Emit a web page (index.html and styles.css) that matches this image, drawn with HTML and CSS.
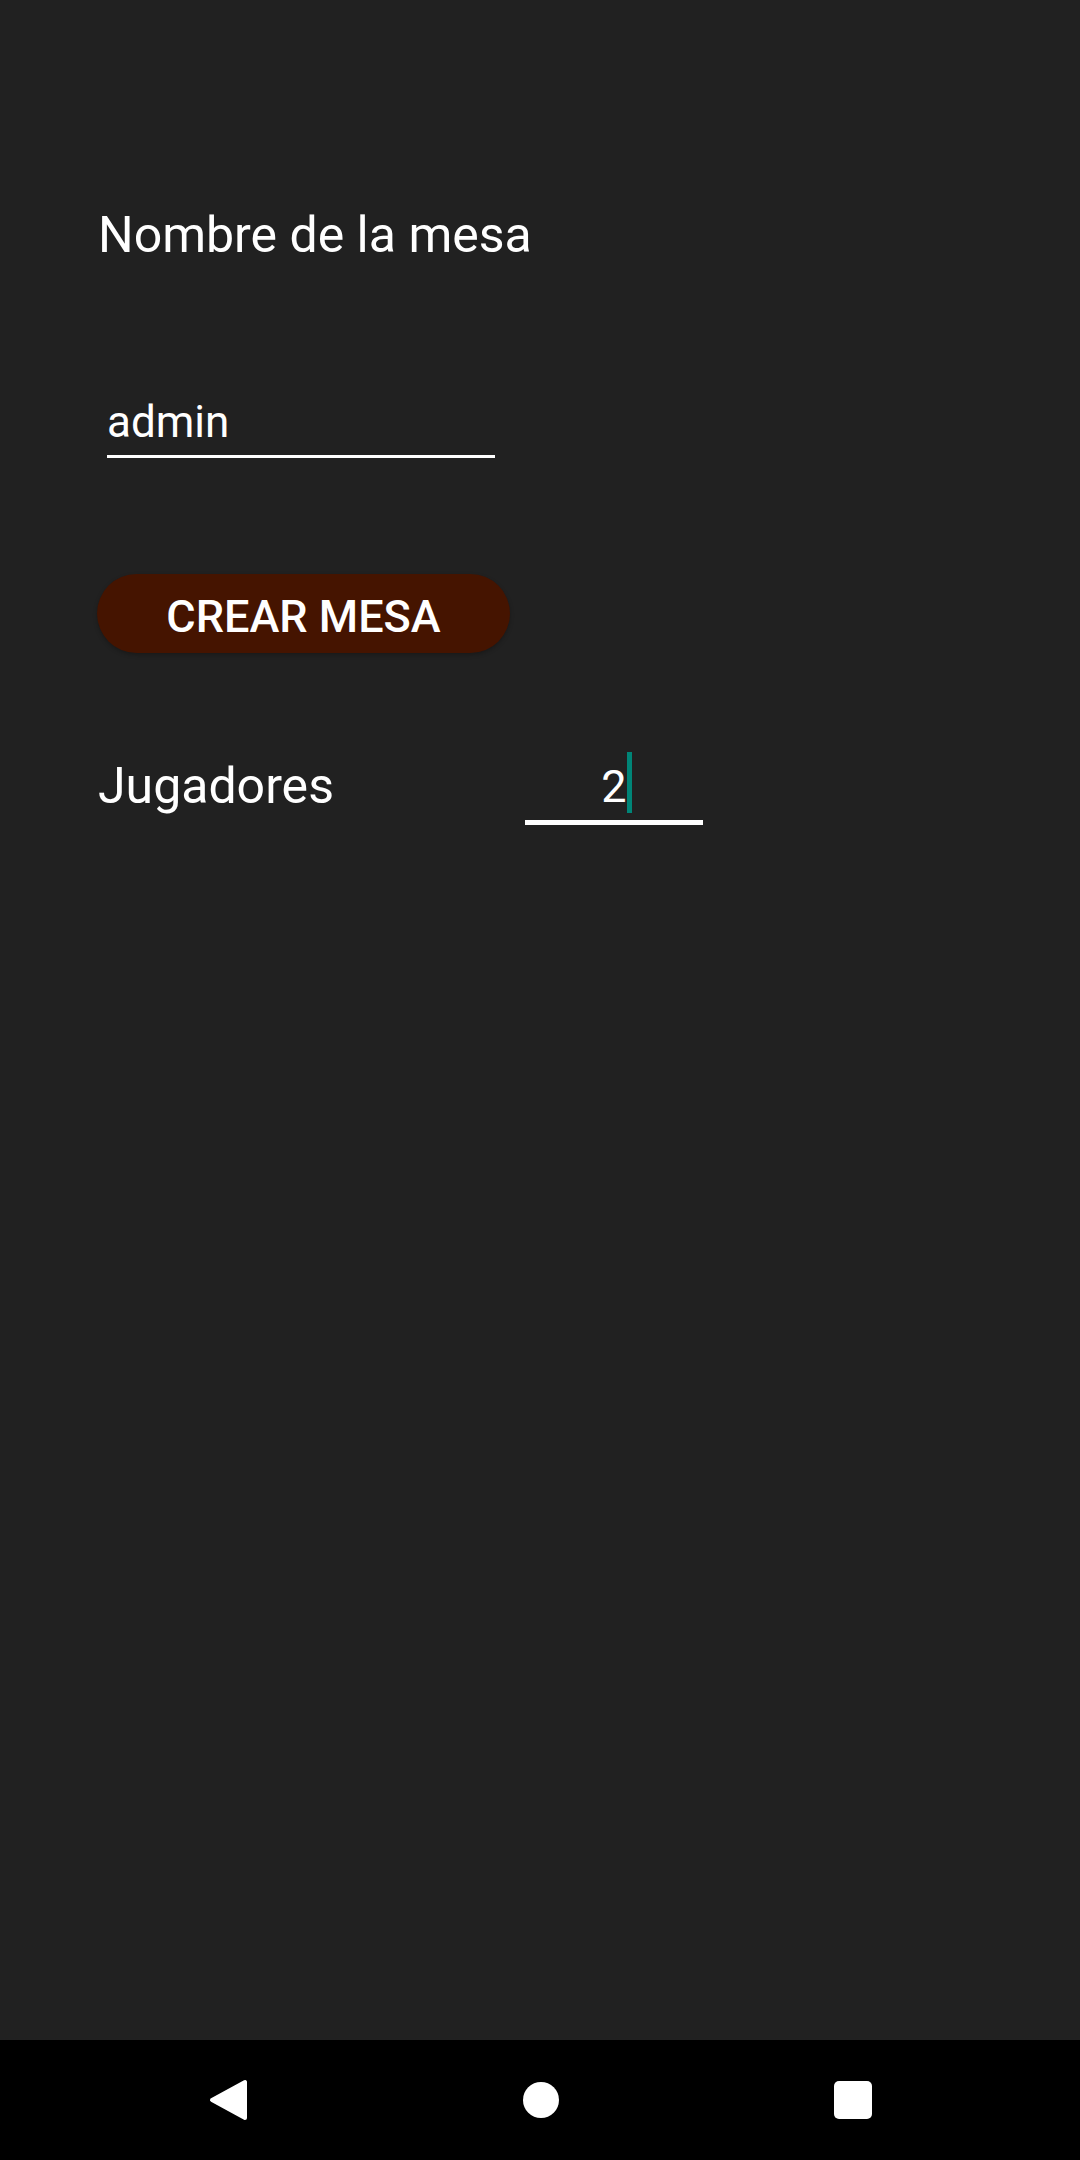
FILE: index.html
```html
<!DOCTYPE html>
<html lang="es">
<head>
<meta charset="utf-8">
<title>Crear mesa</title>
<link rel="stylesheet" href="styles.css">
</head>
<body>
<div class="screen">
  <main class="content">
    <div class="title">Nombre de la mesa</div>
    <div class="name-input">admin</div>
    <div class="btn">CREAR MESA</div>
    <div class="row">
      <div class="label">Jugadores</div>
      <div class="num-input"><span class="num">2<span class="cursor"></span></span></div>
    </div>
  </main>
  <nav class="navbar">
    <svg class="nav-icon" width="40" height="44" viewBox="0 0 40 44"><polygon points="37,4 37,40 4,22" fill="#fff" stroke="#fff" stroke-width="4" stroke-linejoin="round"/></svg>
    <span class="home"></span>
    <span class="recents"></span>
  </nav>
</div>
</body>
</html>
```

FILE: styles.css
```css
html, body {
  margin: 0;
  padding: 0;
  background: #212121;
}
.screen {
  width: 1080px;
  height: 2160px;
  display: flex;
  flex-direction: column;
  font-family: Roboto, "Liberation Sans", sans-serif;
  color: #ffffff;
}
.content {
  flex: 1;
  padding: 205px 0 0 98px;
  display: flex;
  flex-direction: column;
  align-items: flex-start;
}
.title {
  font-size: 50px;
  line-height: 60px;
  height: 60px;
}
.name-input {
  margin: 131px 0 0 9px;
  width: 388px;
  font-size: 44px;
  line-height: 52px;
  padding-bottom: 7px;
  border-bottom: 3px solid #ffffff;
}
.btn {
  margin: 116px 0 0 -1px;
  width: 413px;
  height: 73px;
  padding-top: 6px;
  line-height: 73px;
  border-radius: 40px;
  background: #451400;
  text-align: center;
  font-size: 45px;
  font-weight: 500;
  box-shadow: 0 2px 4px rgba(0,0,0,0.25);
}
.row {
  margin-top: 103px;
  display: flex;
  align-items: flex-start;
}
.label {
  width: 427px;
  font-size: 50px;
  line-height: 60px;
}
.num-input {
  margin-top: 5px;
  width: 178px;
  text-align: center;
  font-size: 45px;
  line-height: 52px;
  padding-bottom: 7px;
  border-bottom: 5px solid #ffffff;
}
.num {
  position: relative;
}
.cursor {
  position: absolute;
  left: 100%;
  top: -8px;
  width: 5px;
  height: 61px;
  background: #008577;
}
.navbar {
  height: 120px;
  background: #000000;
  display: flex;
  align-items: center;
  justify-content: center;
  gap: 275px;
}
.nav-icon {
  display: block;
  width: 40px;
  height: 44px;
}
.home {
  display: block;
  width: 36px;
  height: 36px;
  border-radius: 50%;
  background: #ffffff;
}
.recents {
  display: block;
  width: 38px;
  height: 38px;
  border-radius: 5px;
  background: #ffffff;
}
```
